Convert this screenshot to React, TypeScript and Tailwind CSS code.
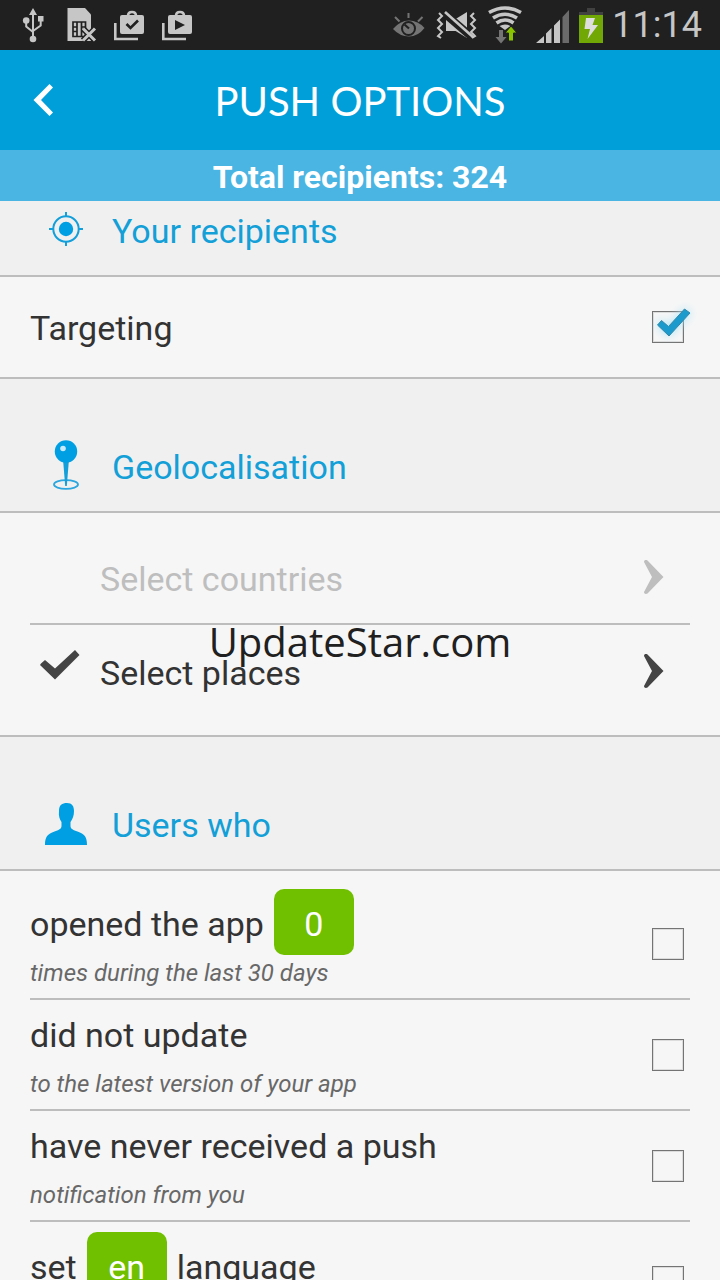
import { useState } from 'react';

const ROBOTO = "font-['Roboto','Liberation_Sans',sans-serif]";

const StatusBar = () => (
  <div className="flex h-[50px] shrink-0 items-center justify-between bg-[#202020] pl-[22px] pr-[18px] text-[#c6c6c6]">
    <div className="flex gap-4">
      <svg width="28" height="50" viewBox="0 0 28 50" fill="currentColor">
        <path d="M11 8l4 7H7zM10 14h2v24h-2z" />
        <circle cx="11" cy="39" r="3.3" />
        <circle cx="4.2" cy="20.5" r="3.3" />
        <path d="M16 16h5.5v5.5H16z" />
        <path d="M4.2 22v4.5l6.800 5.500M18.700 21v4.500L11 31" fill="none" stroke="currentColor" strokeWidth="2" />
      </svg>
      <svg width="31" height="50" viewBox="0 0 31 50">
        <path d="M1.500 8H19l6 6.500V41H1.500z" fill="currentColor" />
        <path d="M7 22h12.500v14.500H7zM11 22v14.500M15.500 22v14.500M7 27h4M7 31.500h4M15.500 27h4M15.500 31.500h4" fill="none" stroke="#202020" strokeWidth="1.7" />
        <path d="M17 28.500l12 12M29 28.500l-12 12" stroke="#202020" strokeWidth="6" />
        <path d="M17 28.500l12 12M29 28.500l-12 12" stroke="currentColor" strokeWidth="3" />
      </svg>
      <Bag>
        <path d="M13.500 24l4 4 7.500-7.500" fill="none" stroke="#202020" strokeWidth="2.6" />
      </Bag>
      <Bag>
        <path d="M14 20l10 5-10 5z" fill="#202020" />
      </Bag>
    </div>
    <div className="flex items-center gap-2">
      <svg width="36" height="50" viewBox="0 0 36 50" fill="none" stroke="#747474">
        <path d="M1 29Q8 20.500 17 20.500T32.500 28Q26 36.500 17 36.500T1 29z" fill="#747474" stroke="none" />
        <circle cx="16.5" cy="28.5" r="6.5" stroke="#202020" strokeWidth="2" />
        <path d="M12.500 24.500l4.500 4" stroke="#202020" strokeWidth="2.2" />
        <path d="M16.500 13v5M3 17l4.500 4.500M30.500 17L26 21.500" strokeWidth="2" />
      </svg>
      <svg width="43" height="50" viewBox="0 0 43 50" fill="none" stroke="currentColor">
        <path d="M10 20h8L31 12v26L18 30h-8z" fill="currentColor" stroke="none" />
        <path d="M8 13l29 25" stroke="#202020" strokeWidth="8" />
        <path d="M9 12l28 25" strokeWidth="2.6" />
        <path d="M10 21l11 10H10z" fill="currentColor" stroke="none" />
        <path d="M3 13l3 3-4 4 4 4-4 4 4 4-4 4 3 2M38 13l-3 3 4 4-4 4 4 4-4 4 4 4-3 2" strokeWidth="2" />
      </svg>
      <svg width="41" height="50" viewBox="0 0 41 50" fill="none">
        <path d="M2 12.500q16-9 32 0M6 18q12-7.500 24 0M9.500 23q8.500-6 17 0" stroke="currentColor" strokeWidth="3.6" />
        <path d="M12.500 26q5.500-3 11 0L18 30z" fill="currentColor" />
        <path d="M12 30h4v7h3.500L14 43.500 8.500 37H12z" fill="#747474" />
        <path d="M24 26l6 7h-3.500v8h-5v-8H18z" fill="#8ac400" stroke="#202020" strokeWidth="1" />
      </svg>
      <svg width="34" height="50" viewBox="0 0 34 50" fill="currentColor">
        <path d="M0 43l8-7v7zM10 43v-9.500l5.500-5.500v15zM18 43V25.500l6-6V43z" />
        <path d="M26.500 43V17L33 10v33z" fill="#6b6b6b" />
      </svg>
      <svg width="26" height="50" viewBox="0 0 26 50">
        <path d="M9 8h8v4h8v4H1v-4h8z" fill="#414141" />
        <path d="M1 15h24v28H1z" fill="#72a806" />
        <path d="M8 18h9l-2.500 7H20L9.500 39l2.500-10H6.500z" fill="#dedede" />
      </svg>
      <span className="text-4xl leading-[50px]">11:14</span>
    </div>
  </div>
);

const Bag = ({ children }: any) => (
  <svg width="32" height="50" viewBox="0 0 32 50" fill="none">
    <rect x="7" y="15" width="24" height="19" rx="2" fill="currentColor" />
    <path d="M15 16q0-4 4-4t4 4M2.300 23v16H25" stroke="currentColor" strokeWidth="2.6" />
    {children}
  </svg>
);

const TargetIcon = () => (
  <svg width="36" height="36" viewBox="0 0 36 36" fill="none" stroke="#139fd9" strokeWidth="2">
    <circle cx="18" cy="17" r="12.7" />
    <circle cx="18" cy="17" r="7.2" fill="#009fe3" stroke="none" />
    <path d="M18 0v5M18 29v5M1 17h5M30 17h5" />
  </svg>
);

const PinIcon = () => (
  <svg width="28" height="52" viewBox="0 0 28 52">
    <ellipse cx="14" cy="44.5" rx="12" ry="4.3" fill="none" stroke="#2ba6de" strokeWidth="1.8" />
    <path d="M11 19h6l-2.200 27h-1.600z" fill="#139fd9" />
    <circle cx="14" cy="11.5" r="11.2" fill="#009fe3" />
    <circle cx="11" cy="8.5" r="2.8" fill="#c9eafa" />
  </svg>
);

const UserIcon = () => (
  <svg width="42" height="44" viewBox="0 0 42 44" fill="#009fe3">
    <path d="M14 9c0-6 3-8 8-8 5 0 7 3 7 8 0 5-1.500 8-3.500 11v4c0 3 3 4 7 5.500 7 2.500 9.500 5 9.500 13.500H0c0-8.500 2.500-11 9.500-13.500 4-1.500 7-2.500 7-5.500v-4C14.500 17 13.500 14 14 9z" />
  </svg>
);

const Arrow = () => (
  <svg width="20" height="36" viewBox="0 0 20 36" fill="currentColor">
    <path d="M0 3C0 1 2 .500 3.500 1.500L19.500 18 3.500 34.500C2 35.500 0 35 0 33L8 18z" />
  </svg>
);

const Heading = ({ icon, title, first }: any) => (
  <div className={`border-b-2 border-[#bdbdbd] bg-[#f0f0f0] px-9 pb-4 ${first ? '' : 'pt-[58px]'}`}>
    <div className="flex h-[58px] items-center gap-4">
      <span className="flex w-[60px] justify-center">{icon}</span>
      <h2 className="pt-0.5 text-[34px] leading-10 text-[#139fd7]">{title}</h2>
    </div>
  </div>
);

const CheckBox = ({ id, checked, onChange }: any) => (
  <span className="relative mr-[6px] size-8 shrink-0">
    <input
      id={id}
      type="checkbox"
      checked={checked}
      onChange={onChange}
      className="block size-8 appearance-none border border-[#747474] shadow-[inset_0_0_0_1px_#dcdcdc]"
    />
    {checked && (
      <svg className="pointer-events-none absolute -top-1 left-0 drop-shadow-[0_0_4px_#a5e4f8]" width="42" height="36" viewBox="0 0 42 36">
        <path d="M5.500 18l4-4.500 7 6L32.500 2l5.500 4-21 23z" fill="#1b9bcd" stroke="#3586a6" strokeWidth="1" strokeLinejoin="round" />
      </svg>
    )}
  </span>
);

const Page = () => {
  const [targeting, setTargeting] = useState(true);
  const [selected, setSelected] = useState<string[]>([]);

  const toggle = (id: string) => {
    setSelected(selected.includes(id) ? selected.filter((s) => s !== id) : [...selected, id]);
  };

  const filters = [
    { id: 'opened', before: 'opened the app', value: '0', after: '', hint: 'times during the last 30 days' },
    { id: 'update', before: 'did not update', value: '', after: '', hint: 'to the latest version of your app' },
    { id: 'never', before: 'have never received a push', value: '', after: '', hint: 'notification from you' },
    { id: 'language', before: 'set', value: 'en', after: 'language', hint: 'on their device' },
  ];

  return (
    <div className={`flex h-screen flex-col overflow-hidden bg-[#f6f6f6] text-[#333] ${ROBOTO}`}>
      <StatusBar />
      <header className="grid h-[100px] shrink-0 grid-cols-[88px_1fr_88px] items-center bg-[#009fda] text-white">
        <button aria-label="Back" className="flex h-full items-center pl-[33px]">
          <svg width="20" height="32" viewBox="0 0 20 32" fill="currentColor">
            <path d="M16.500 0L20 3.500 8 16l12 12.500-3.500 3.500L.500 16z" />
          </svg>
        </button>
        <h1 className="pt-0.5 text-center font-['Lato','Liberation_Sans',sans-serif] text-[40px] leading-[50px]">PUSH OPTIONS</h1>
      </header>
      <div className="flex h-[51px] shrink-0 items-center justify-center bg-[#4ab4e2] pt-0.5 text-[32px] font-bold text-white">
        Total recipients: 324
      </div>

      <main className="min-h-0 flex-1 overflow-hidden text-[34px] leading-10">
        <Heading icon={<TargetIcon />} title="Your recipients" first />
        <div className="flex h-[102px] items-center justify-between border-b-2 border-[#bdbdbd] px-[30px]">
          <label htmlFor="targeting" className="pt-0.5">Targeting</label>
          <CheckBox id="targeting" checked={targeting} onChange={() => setTargeting(!targeting)} />
        </div>

        <Heading icon={<PinIcon />} title="Geolocalisation" />
        <div className="relative border-b-2 border-[#bdbdbd] px-[30px] py-[18px]">
          <button disabled className="flex h-[94px] w-full items-center border-b-2 border-[#bdbdbd] pl-[70px] pr-[26px] text-[#bebebe]">
            <span className="flex-1 pt-1 text-left">Select countries</span>
            <Arrow />
          </button>
          <button className="flex h-[92px] w-full items-center pl-[10px] pr-[26px]">
            <svg className="mr-5 -mt-3" width="40" height="32" viewBox="0 0 40 32" fill="#444">
              <path d="M1 14.500L5 11l10 8.500L35 1l4.500 5L15 30.500 0 16z" />
            </svg>
            <span className="flex-1 pt-1 text-left">Select places</span>
            <span className="text-[#444]">
              <Arrow />
            </span>
          </button>
          <p className="pointer-events-none absolute inset-x-0 top-[104px] text-center font-['Open_Sans','Noto_Sans',sans-serif] text-[40px] leading-[50px] text-[#202020]">
            UpdateStar.com
          </p>
        </div>

        <Heading icon={<UserIcon />} title="Users who" />
        <ul className="px-[30px] pt-[18px]">
          {filters.map((f) => (
            <li key={f.id} className="flex items-center justify-between border-b-2 border-[#bdbdbd]">
              <div className={f.after ? 'pt-[10px]' : ''}>
                <div className="flex h-[66px] items-center gap-[10px]">
                  <label htmlFor={f.id} className="pt-1">{f.before}</label>
                  {f.value && (
                    <button className="h-[66px] w-20 rounded-[10px] bg-[#70c000] pt-1 text-white">{f.value}</button>
                  )}
                  {f.after && <span className="pt-1">{f.after}</span>}
                </div>
                <p className="pb-[7px] text-2xl leading-9 italic text-[#686868]">{f.hint}</p>
              </div>
              <CheckBox id={f.id} checked={selected.includes(f.id)} onChange={() => toggle(f.id)} />
            </li>
          ))}
        </ul>
      </main>
    </div>
  );
};

export default Page;
